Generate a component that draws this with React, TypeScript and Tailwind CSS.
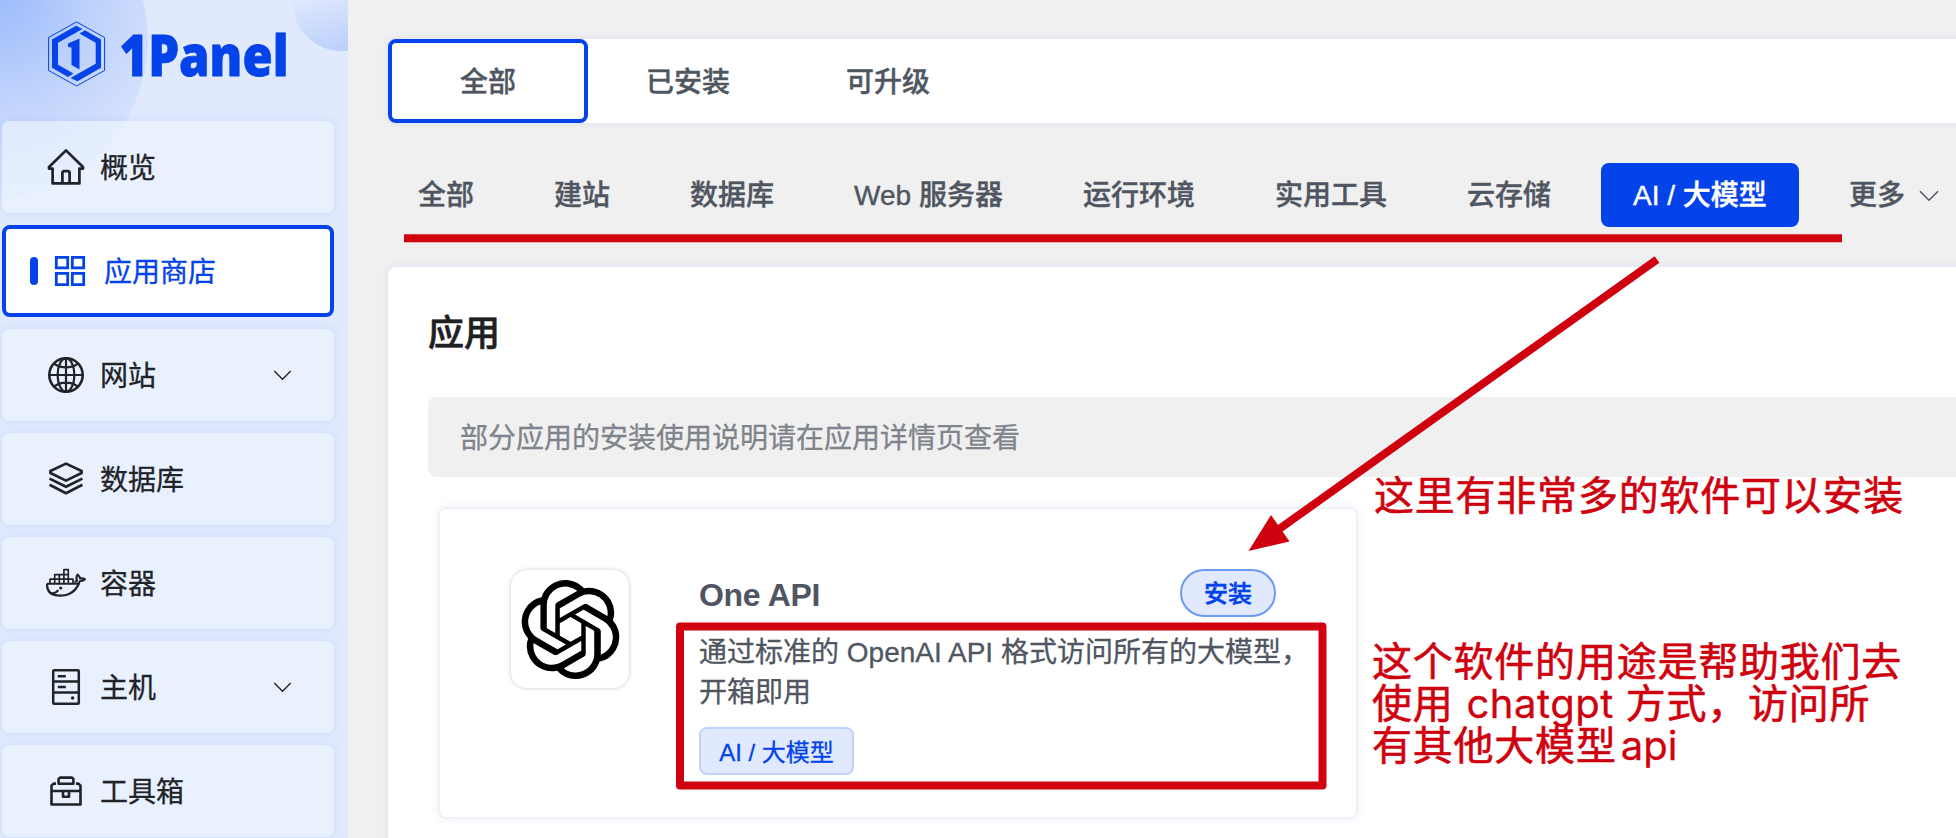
import React from "react";
import { SiOpenai } from "react-icons/si";

type IconProps = { className?: string };

function Logo() {
  return (
    <svg className="h-[78px] w-[250px] overflow-visible" viewBox="0 0 250 78" fill="none">
      <path d="M28.5 .9 56.6 16.5v33L28.5 64.9.6 49.5v-33z" stroke="#0443e9" strokeWidth="1" />
      <path d="M28 4.8 34.5 8 10 21.8V43.8L25.5 52.6 20 56 4 46.8V18.5z" fill="#0443e9" />
      <path d="M37 9.3 53 18.5V46.8L29.5 60.3 22.5 57 47.7 42.8V21.8L31.5 12.5z" fill="#0443e9" />
      <path d="M31.5 17.5V48.5L23.5 44V26.5L20 26V22.5z" fill="#0443e9" />
      <text
        x="71.5"
        y="54.5"
        textLength="169"
        lengthAdjust="spacingAndGlyphs"
        fill="#0443e9"
        stroke="#0443e9"
        strokeWidth="0.8"
        fontSize="56.5"
        fontWeight="800"
        fontFamily="'Open Sans', 'Noto Sans', sans-serif"
      >
        1Panel
      </text>
    </svg>
  );
}

function HomeIcon({ className }: IconProps) {
  return (
    <svg className={className} viewBox="0 0 40 40" fill="none" stroke="currentColor" strokeWidth="2.7" strokeLinejoin="round">
      <path d="M20 3.4 37 20v1.6h-3.6v14.8H6.6V21.6H3V20z" />
      <path d="M16.4 36V25.2l1-1h5.2l1 1V36" />
    </svg>
  );
}

function StoreIcon({ className }: IconProps) {
  return (
    <svg className={className} viewBox="0 0 40 40" fill="none" stroke="currentColor" strokeWidth="2.8">
      <path d="M6.3 6.3h11.4v10.6H6.3zM22.3 6.3h11.4v10.6H22.3zM6.3 22.3h11.4v11.4H6.3zM22.3 22.3h11.4v11.4H22.3z" />
    </svg>
  );
}

function GlobeIcon({ className }: IconProps) {
  return (
    <svg className={className} viewBox="0 0 40 40" fill="none" stroke="currentColor" strokeWidth="2.2">
      <circle cx="20" cy="20" r="16.7" strokeWidth="2.6" />
      <ellipse cx="20" cy="20" rx="8.4" ry="16.7" />
      <path d="M20 3v34M3 20h34M8 8.4c6.4 5.4 17.6 5.4 24 0M8 31.6c6.4-5.4 17.6-5.4 24 0" />
    </svg>
  );
}

function LayersIcon({ className }: IconProps) {
  return (
    <svg className={className} viewBox="0 0 40 40" fill="none" stroke="currentColor" strokeWidth="2.7" strokeLinejoin="round">
      <path d="M20 4.6 35.6 12v2L20 21.6 4.4 14v-2z" />
      <path d="M3.6 19.6 20 27.8l16.4-8.2M3.6 25.8 20 34.2l16.4-8.4" />
    </svg>
  );
}

function DockerIcon({ className }: IconProps) {
  return (
    <svg className={className} viewBox="0 0 40 40" fill="none" stroke="currentColor" strokeWidth="1.7" strokeLinejoin="round">
      <path d="M.9 20.8h30.4c1.6-.6 2.400-1.600 2.800-2.800 2 .2 3.600-.2 4.800-1.600-1.600-1.200-3.200-1.200-4.800-.8-.2-1.800-1-2.800-2.600-4-1.200 1.800-1.400 4-.4 6-.6.8-1.600 1-2.600 1" strokeWidth="2.100" />
      <path d="M1 20.800c-.2 4.400 1.400 8 4.800 10.200 3.600 2 12 2.400 17.200 0 4.800-2.200 8-5.800 10.200-11" strokeWidth="2.300" />
      <path d="M4 20v-3.800h23V20M8.700 20v-8.400h13.600V20M13.300 20v-8.400M17.900 20V6.600h4.400V12M4 16.200h23" />
      <path d="M4.500 30c4 .6 6.200-.6 7.800-2.800" strokeWidth="2" />
      <circle cx="14.700" cy="25" r="1.600" fill="currentColor" stroke="none" />
    </svg>
  );
}

function ServerIcon({ className }: IconProps) {
  return (
    <svg className={className} viewBox="0 0 40 40" fill="none" stroke="currentColor" strokeWidth="2.500">
      <rect x="7.200" y="3.200" width="25.600" height="33.600" rx="1" />
      <path d="M7 14.400h26M7 25.400h26M11.800 9.200h8M11.800 20h8" />
      <circle cx="26.600" cy="31" r="1.800" fill="currentColor" stroke="none" />
    </svg>
  );
}

function ToolboxIcon({ className }: IconProps) {
  return (
    <svg className={className} viewBox="0 0 40 40" fill="none" stroke="currentColor" strokeWidth="2.600" strokeLinejoin="round">
      <path d="M10 12.600H7.600L5.500 14.700V33.500h29V14.700l-2.100-2.100H30" />
      <path d="M12.600 12.800V8l1.400-1.400h12L27.400 8v4.800zM5.500 20h29M17 20v5.800h6V20" />
    </svg>
  );
}

function Chevron({ className }: IconProps) {
  return (
    <svg className={className} viewBox="0 0 20 12" fill="none" stroke="currentColor" strokeWidth="1.500">
      <path d="M1 1.200 10 10.200 19 1.200" />
    </svg>
  );
}

const menu = [
  { label: "概览", Icon: HomeIcon },
  { label: "应用商店", Icon: StoreIcon, active: true },
  { label: "网站", Icon: GlobeIcon, expandable: true },
  { label: "数据库", Icon: LayersIcon },
  { label: "容器", Icon: DockerIcon },
  { label: "主机", Icon: ServerIcon, expandable: true },
  { label: "工具箱", Icon: ToolboxIcon },
];

function Sidebar() {
  return (
    <aside className="relative flex h-full w-[348px] shrink-0 flex-col overflow-hidden bg-[#e1e9fd]">
      <div className="absolute -top-[119px] -left-[170px] size-[318px] rounded-full bg-[radial-gradient(circle_at_170px_119px,#9dbcfb_0px,#c3d5fc_110px,#cfddfc_150px,#dce6fd_200px)]" />
      <div className="absolute -top-[49px] left-[292px] size-[100px] rounded-full bg-[linear-gradient(165deg,#dfe8fd_40%,#b2cafb_100%)]" />
      <div className="relative h-[121px] shrink-0 pt-[21px] pl-12">
        <Logo />
      </div>
      <nav className="relative flex flex-col gap-3 pl-0.5">
        {menu.map(({ label, Icon, active, expandable }) =>
          active ? (
            <div key={label} className="flex h-[92px] w-[332px] items-center rounded-lg border-4 border-[#0443e9] bg-white pl-6 text-[28px] text-[#0443e9] [-webkit-text-stroke:0.300px]">
              <span className="h-7 w-2 rounded-full bg-[#0443e9]" />
              <Icon className="ml-3 size-10" />
              <span className="ml-[14px] pt-[3px]">{label}</span>
            </div>
          ) : (
            <div key={label} className="flex h-[92px] w-[332px] items-center rounded-lg bg-[#edf5ff]/65 pl-11 text-[28px] text-[#202327] shadow-[0_0_8px_rgba(0,94,235,0.100)] [-webkit-text-stroke:0.300px]">
              <Icon className="size-10" />
              <span className="ml-[14px] pt-[3px]">{label}</span>
              {expandable && <Chevron className="mr-[42px] ml-auto h-[11px] w-[19px]" />}
            </div>
          ),
        )}
      </nav>
    </aside>
  );
}

const tabs = ["全部", "已安装", "可升级"];
const categories = ["全部", "建站", "数据库", "Web 服务器", "运行环境", "实用工具", "云存储"];

function Content() {
  return (
    <main className="min-w-0 flex-1 overflow-hidden pt-[39px] pl-10">
      <div className="flex h-[84px] w-[1600px] rounded-lg bg-white text-[28px] font-medium text-[#4f5661] shadow-[0_0_8px_rgba(0,94,235,0.100)] [-webkit-text-stroke:0.400px]">
        {tabs.map((tab, i) => (
          <div
            key={tab}
            className={
              i === 0
                ? "flex w-[200px] items-center justify-center rounded-lg border-4 border-[#0443e9] pt-[3px]"
                : "flex w-[200px] items-center justify-center pt-[3px]"
            }
          >
            {tab}
          </div>
        ))}
      </div>

      <div className="mt-10 flex h-16 w-[1600px] items-center gap-20 pl-[30px] text-[28px] font-medium whitespace-nowrap text-[#4f5661] [-webkit-text-stroke:0.400px]">
        {categories.map((c) => (
          <span key={c} className="pt-0.5">
            {c}
          </span>
        ))}
        <span className="-ml-[30px] flex h-16 w-[198px] items-center justify-center rounded-lg bg-[#0443e9] pt-0.5 text-white">AI / 大模型</span>
        <span className="-ml-[30px] flex items-center pt-0.5">
          更多
          <Chevron className="ml-[14px] h-3 w-5" />
        </span>
      </div>

      <section className="mt-10 h-[620px] w-[1600px] rounded-lg bg-white pt-10 pl-10 shadow-[0_0_8px_rgba(0,94,235,0.100)]">
        <h1 className="h-[90px] text-[36px] leading-[54px] font-medium text-[#1f2022] [-webkit-text-stroke:0.600px]">应用</h1>
        <div className="flex h-20 items-center rounded-lg bg-[#f0f0f0] pt-[3px] pl-8 text-[28px] text-[#7f838b] [-webkit-text-stroke:0.300px]">
          部分应用的安装使用说明请在应用详情页查看
        </div>
        <article className="mt-[30px] ml-[10px] flex h-[312px] w-[920px] rounded-lg border-2 border-[#eff1f3] pl-[71px] shadow-[0_0_10px_rgba(0,94,235,0.080)]">
          <div className="mt-[61px] flex size-[118px] shrink-0 items-center justify-center rounded-2xl bg-white shadow-[0_0_4px_rgba(0,0,0,0.220)]">
            <SiOpenai className="size-[99px] text-black" />
          </div>
          <div className="mt-[60px] ml-[70px] w-[577px]">
            <div className="flex h-12 items-center justify-between text-[#4f5661]">
              <h2 className="pt-[3px] text-[32px] font-bold tracking-[-0.300px]">One API</h2>
              <button className="h-12 w-24 rounded-full border-2 border-[#6b9bf5] bg-[#e0e9fe] pt-0.5 text-[24px] font-medium text-[#0443e9] [-webkit-text-stroke:0.500px]">安装</button>
            </div>
            <p className="mt-4 text-[28px] leading-10 whitespace-nowrap text-[#4f5661] [-webkit-text-stroke:0.300px]">
              通过标准的 OpenAI API 格式访问所有的大模型，
              <br />
              开箱即用
            </p>
            <span className="mt-[14px] flex h-12 w-[155px] items-center justify-center rounded-lg border-2 border-[#bfd3fb] bg-[#e0e9fe] pt-[3px] text-[24px] text-[#0443e9] [-webkit-text-stroke:0.300px]">
              AI / 大模型
            </span>
          </div>
        </article>
      </section>
    </main>
  );
}

function Annotations() {
  return (
    <div className="pointer-events-none absolute inset-0 text-[40px] leading-[41px] tracking-[0.780px] whitespace-nowrap text-[#d0010e] [-webkit-text-stroke:0.600px]">
      <svg className="absolute inset-0 h-full w-full" viewBox="0 0 1956 838" fill="none" stroke="#d0010e" strokeWidth="8">
        <path d="M404 238.200h1438" />
        <path d="M1657 259.500 1275 532" />
        <path d="M1248.500 551 1271 515l18.500 26.500z" fill="#d0010e" stroke="none" />
        <rect x="680" y="626.500" width="642.500" height="159" strokeLinejoin="round" />
      </svg>
      <p className="absolute top-[476px] left-[1374px]">这里有非常多的软件可以安装</p>
      <p className="absolute top-[642px] left-[1372px]">
        这个软件的用途是帮助我们去
        <br />
        使用 <span className="ml-px font-['Inter'] tracking-[0.500px] [-webkit-text-stroke:0.300px]">chatgpt</span> 方式，访问所
        <br />
        有其他大模型<span className="ml-1 font-['Inter'] tracking-normal [-webkit-text-stroke:0.300px]">api</span>
      </p>
    </div>
  );
}

export default function App() {
  return (
    <div lang="zh-CN" className="relative flex h-[838px] w-[1956px] overflow-hidden bg-[#f0f0f0] font-['Liberation_Sans','Noto_Sans_CJK_SC',sans-serif]">
      <Sidebar />
      <Content />
      <Annotations />
    </div>
  );
}
